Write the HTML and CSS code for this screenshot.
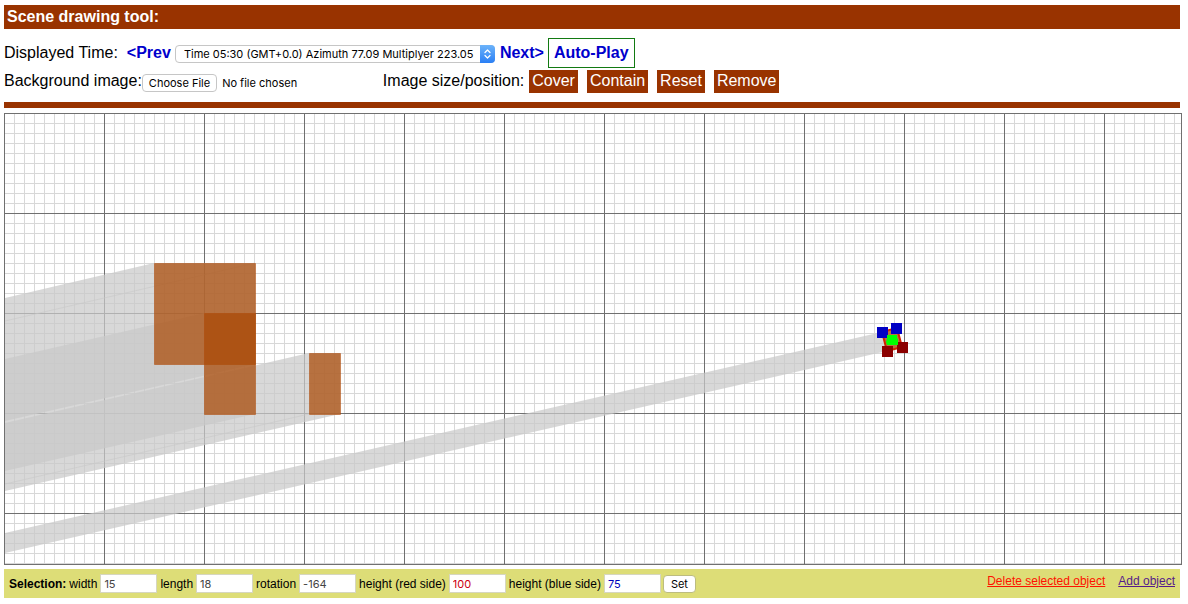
FILE: index.html
```
<!DOCTYPE html>
<html lang="en">
<head>
<meta charset="utf-8">
<title>Scene drawing tool</title>
<link rel="stylesheet" href="styles.css">
</head>
<body>
<header class="title-bar"><h1 class="title">Scene drawing tool:</h1></header>

<section class="controls">
  <div class="row">
    <label for="time">Displayed Time:</label>
    <button type="button" class="step step-prev">&lt;Prev</button>
    <span class="select-wrap">
      <select id="time" class="time-select">
        <option>Time 05:30 (GMT+0.0) Azimuth 77.09 Multiplyer 223.05</option>
      </select>
      <svg class="select-arrows" viewBox="0 0 15 18" aria-hidden="true">
        <path d="M5 7.5 7.5 5 10 7.5M5 10.5 7.5 13 10 10.5" fill="none" stroke="#fff" stroke-width="1.3" stroke-linecap="round" stroke-linejoin="round"/>
      </svg>
    </span>
    <button type="button" class="step step-next">Next&gt;</button>
    <button type="button" class="step autoplay">Auto-Play</button>
  </div>
  <div class="row">
    <label for="bg">Background image:</label>
    <input id="bg" class="file" type="file">
    <span class="size-label">Image size/position:</span>
    <div class="size-buttons">
      <button type="button" class="chip">Cover</button>
      <button type="button" class="chip">Contain</button>
      <button type="button" class="chip">Reset</button>
      <button type="button" class="chip">Remove</button>
    </div>
  </div>
</section>

<main class="scene">
  <svg class="scene-svg" role="img" aria-label="Scene plan with shadows">
    <defs>
      <pattern id="minor" width="10" height="10" patternUnits="userSpaceOnUse">
        <path d="M9 0h1v10h-1zM0 9h10v1H0z" fill="#d8d8d8"/>
      </pattern>
      <pattern id="major" width="100" height="100" patternUnits="userSpaceOnUse">
        <path d="M99 0h1v100h-1zM0 99h100v1H0z" fill="#707070"/>
      </pattern>
    </defs>
    <rect width="100%" height="100%" fill="url(#minor)"/>
    <rect width="100%" height="100%" fill="url(#major)"/>
    <g class="shadow">
      <path d="M0 184 149 149H250V250L0 307z"/>
      <path d="M0 245 199 199H250V300L0 357z"/>
      <path d="M0 309 304 239H335V300L0 377z"/>
      <path d="M0 419 877 218 892 214 897 233 882 237 0 439z"/>
    </g>
    <path class="shadow-edge" d="M0 207 250 149M0 370 304 300"/>
    <g class="block">
      <path d="M149.5 149.5h101v101h-101z"/>
      <path d="M199.5 199.5h51v101h-51z"/>
      <path d="M304.5 239.5h31v61h-31z"/>
      <path class="selected" d="M877 218 892 214 897 233 882 237z"/>
    </g>
    <path class="handle-blue" d="M872 213h11v11h-11zM886 209h11v11h-11z"/>
    <path class="handle-red" d="M877 232h11v11h-11zM892 228h11v11h-11z"/>
    <path class="handle-center" d="M882 221h10v3l1 1v6h-11l-1-3 1-3z"/>
  </svg>
</main>

<form class="selection">
  <strong>Selection:</strong>
  <label for="w">width</label><input id="w" class="num" value="15">
  <label for="l">length</label><input id="l" class="num" value="18">
  <label for="r">rotation</label><input id="r" class="num" value="-164">
  <label for="hr">height (red side)</label><input id="hr" class="num red" value="100">
  <label for="hb">height (blue side)</label><input id="hb" class="num blue" value="75">
  <button type="button" class="set">Set</button>
  <nav class="links">
    <a class="delete" href="#delete">Delete selected object</a>
    <a class="add" href="#add">Add object</a>
  </nav>
</form>
</body>
</html>
```
FILE: styles.css
```
body {
  margin: 5px 6px 0 4px;
  background: #fff;
  color: #000;
  font: 16px/18px "Liberation Sans", Arial, sans-serif;
}
button, input, select { font-family: inherit; margin: 0; }

.title-bar { margin-right: 2px; background: #993300; color: #fff; padding: 3px; }
.title { margin: 0; font-size: 16px; line-height: 18px; }

.controls { margin-right: 2px; padding: 9px 0 8px; border-bottom: 6px solid #993300; }
.row { display: flex; align-items: center; white-space: nowrap; }

.step {
  border: 0;
  padding: 0;
  background: none;
  color: #0000cc;
  font-size: 16px;
  line-height: 18px;
  font-weight: bold;
}
.step-prev { margin-left: 9px; }
.autoplay { border: 1px solid #127a12; padding: 5px; margin-left: 4px; }

.select-wrap { position: relative; display: flex; margin: 2px 5px 0 4px; }
.time-select {
  appearance: none;
  width: 320px;
  height: 18px;
  padding: 0 20px 0 8px;
  border: 1px solid #c6c6c6;
  border-radius: 4px;
  background: #fff;
  color: #000;
  font: 11px/16px Inter, sans-serif;
}
.select-arrows {
  position: absolute;
  top: 0;
  right: 0;
  width: 15px;
  height: 18px;
  border-radius: 0 4px 4px 0;
  background: linear-gradient(#6cb3fa, #2a7ff5);
  pointer-events: none;
}

.file { width: 241px; margin-top: 3px; color: #000; font: 11px/16px Inter, sans-serif; }
.file::file-selector-button {
  height: 18px;
  margin: 0 5px 0 0;
  padding: 0 6px;
  border: 1px solid #c6c6c6;
  border-radius: 4px;
  background: #fff;
  color: #000;
  font: 11px/16px Inter, sans-serif;
}
.size-buttons { display: flex; gap: 9px; margin: 2px 0 1px 5px; }
.chip {
  padding: 2px 3px 3px;
  border: 0;
  background: #993300;
  color: #fff;
  font-size: 16px;
  line-height: 18px;
}

.scene { margin: 5px 0 4px; border: 1px solid #707070; }
.scene-svg { display: block; width: 100%; height: 450px; }
.shadow { fill: #c9c9c9; fill-opacity: 0.72; }
.shadow-edge { fill: none; stroke: #c8c8c8; stroke-opacity: 0.6; }
.block { fill: #aa4a06; fill-opacity: 0.72; stroke: #b04a08; stroke-opacity: 0.5; }
.selected { stroke: #d42000; stroke-width: 2; stroke-opacity: 1; }
.handle-blue { fill: #0000c4; }
.handle-red { fill: #8b0000; }
.handle-center { fill: #00ff00; }

.selection {
  display: flex;
  align-items: center;
  margin-right: 2px;
  padding: 5px;
  background: #dddd77;
  font-size: 12px;
  line-height: 14px;
  white-space: nowrap;
}
.selection label { margin: 0 3px; }
.num {
  box-sizing: border-box;
  width: 57px;
  height: 19px;
  padding: 0 3px;
  border: 1px solid #d6d6c0;
  background: #fff;
  color: #444;
  font: 11px/15px Inter, sans-serif;
}
.num.red { color: #cc0011; }
.num.blue { color: #0000bb; }
.set {
  height: 18px;
  margin-left: 2px;
  padding: 0 7px;
  border: 1px solid #bcbc80;
  border-radius: 4px;
  background: #fff;
  color: #000;
  font: 11px/16px Inter, sans-serif;
}
.links { display: flex; gap: 13px; margin-left: auto; padding-bottom: 5px; }
.delete { color: #ff1100; }
.add { color: #551a8b; }
```
